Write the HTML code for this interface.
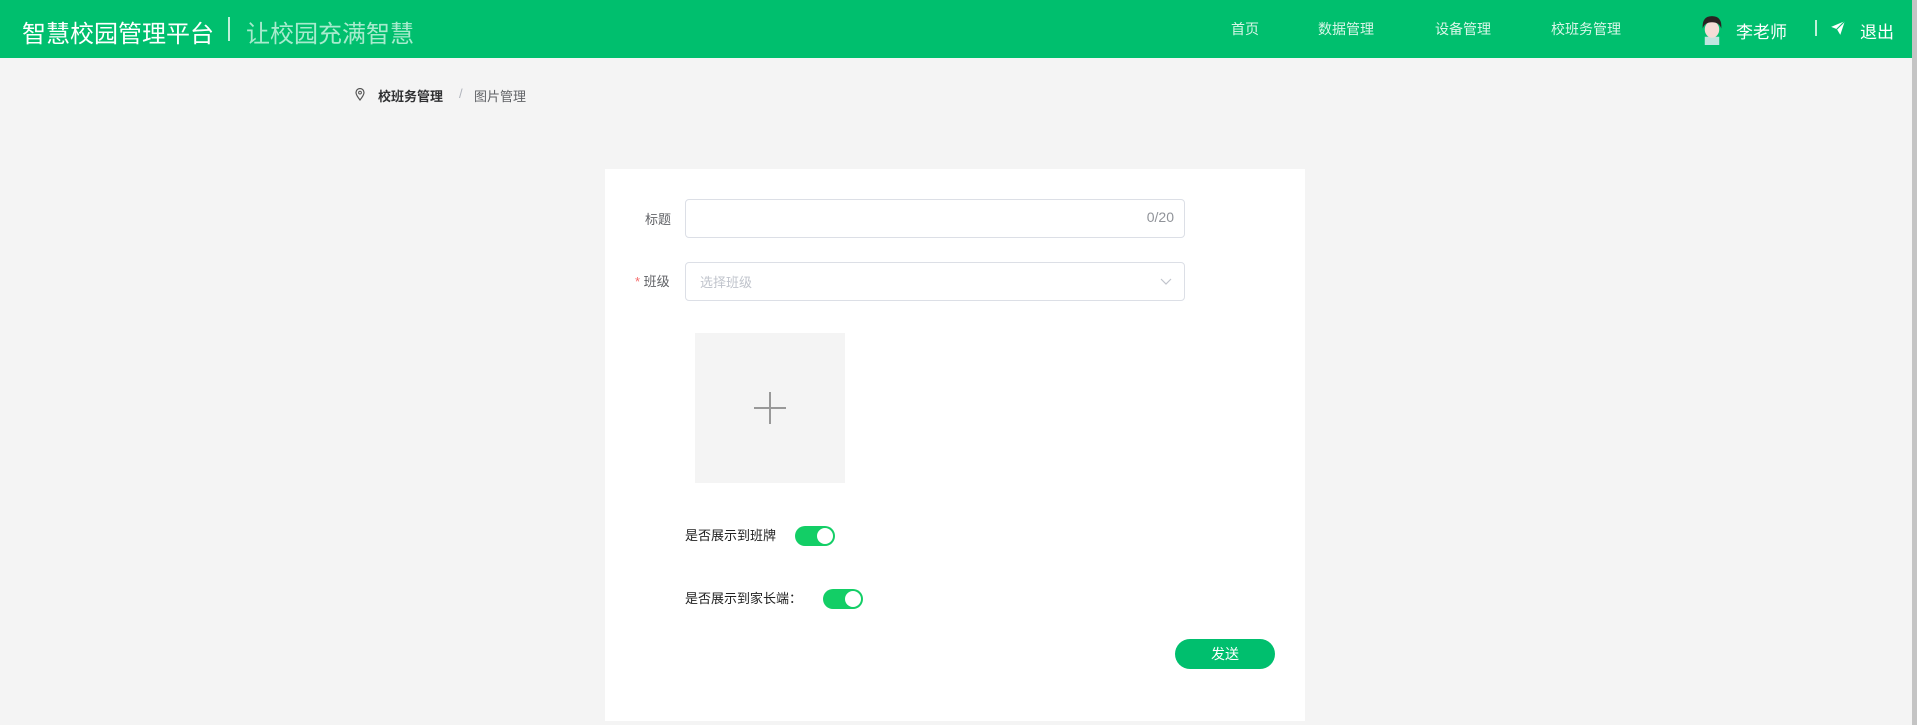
<!DOCTYPE html>
<html><head><meta charset="utf-8"><style>
*{margin:0;padding:0;box-sizing:border-box}
body{width:1917px;height:725px;overflow:hidden;background:#f4f4f4;font-family:"Liberation Sans","Noto Sans CJK SC",sans-serif;position:relative}
.hd{position:absolute;left:0;top:0;width:1912px;height:58px;background:#00bf6e}
.t{position:absolute;color:#fff;white-space:nowrap}
.sb{position:absolute;right:0;top:0;width:5px;height:725px;background:#c4c4c4}
.card{position:absolute;left:605px;top:169px;width:700px;height:552px;background:#fff}
.inp{position:absolute;left:80px;width:500px;height:39px;border:1px solid #dcdfe6;border-radius:4px}
.lbl{position:absolute;font-size:13px;color:#606266}
.tg{position:absolute;width:40px;height:20px;border-radius:10px;background:#13ce66}
.tg:after{content:"";position:absolute;right:2px;top:2px;width:16px;height:16px;border-radius:50%;background:#fff}
</style></head><body>
<div class="hd">
<div class="t" style="left:22px;top:14px;font-size:24px">智慧校园管理平台</div>
<div style="position:absolute;left:228px;top:17px;width:2px;height:24px;background:#bff0d9"></div>
<div class="t" style="left:246px;top:14px;font-size:24px;color:#a7ebcd">让校园充满智慧</div>
<div class="t" style="left:1231px;top:19px;font-size:14px;color:#d8f6e8">首页</div>
<div class="t" style="left:1318px;top:19px;font-size:14px;color:#d8f6e8">数据管理</div>
<div class="t" style="left:1435px;top:19px;font-size:14px;color:#d8f6e8">设备管理</div>
<div class="t" style="left:1551px;top:19px;font-size:14px;color:#d8f6e8">校班务管理</div>
<svg style="position:absolute;left:1700px;top:14px" width="24" height="31" viewBox="0 0 22 30"><rect x="4" y="22" width="14" height="8" fill="#bfe5e0"/><ellipse cx="11" cy="15" rx="7" ry="8" fill="#f4dcd6"/><path d="M2 14 Q1 2 11 2 Q21 2 20 14 Q18 8 11 8 Q4 8 2 14Z" fill="#2a2222"/></svg>
<div class="t" style="left:1736px;top:18px;font-size:17px">李老师</div>
<div style="position:absolute;left:1815px;top:20px;width:2px;height:16px;background:#bff0d9"></div>
<svg style="position:absolute;left:1830px;top:20px" width="16" height="16" viewBox="0 0 14 14"><path d="M1 6 L13 1 L9 13 L6 8 Z" fill="#fff"/><path d="M6 8 L13 1" stroke="#00bf6e" stroke-width="1"/></svg>
<div class="t" style="left:1860px;top:18px;font-size:17px">退出</div>
</div>
<div class="sb"></div>
<svg style="position:absolute;left:355px;top:88px" width="10" height="13" viewBox="0 0 10 13"><path d="M5 12 C1 7 1 5 1 4.5 A4 4 0 0 1 9 4.5 C9 5 9 7 5 12Z" fill="none" stroke="#555" stroke-width="1.2"/><circle cx="5" cy="4.6" r="1.4" fill="none" stroke="#555"/></svg>
<div class="t" style="left:378px;top:86px;font-size:13px;color:#303133;font-weight:bold">校班务管理</div>
<div class="t" style="left:459px;top:86px;font-size:13px;color:#b0b4bc">/</div>
<div class="t" style="left:474px;top:86px;font-size:13px;color:#606266">图片管理</div>
<div class="card">
<div class="lbl" style="left:40px;top:40px">标题</div>
<div class="inp" style="top:30px"><span style="position:absolute;right:10px;top:9px;font-size:14px;color:#909399">0/20</span></div>
<div class="lbl" style="left:30px;top:102px"><span style="color:#f56c6c">*</span> 班级</div>
<div class="inp" style="top:93px"><span style="position:absolute;left:14px;top:9px;font-size:13px;color:#c0c4cc">选择班级</span><svg style="position:absolute;right:12px;top:15px" width="12" height="8" viewBox="0 0 12 8"><path d="M1 1 L6 6 L11 1" fill="none" stroke="#c0c4cc" stroke-width="1.2"/></svg></div>
<div style="position:absolute;left:90px;top:164px;width:150px;height:150px;background:#f4f4f4">
<div style="position:absolute;left:59px;top:74px;width:32px;height:2px;background:#999"></div>
<div style="position:absolute;left:74px;top:59px;width:2px;height:32px;background:#999"></div></div>
<div class="lbl" style="left:80px;top:356px;color:#222">是否展示到班牌</div>
<div class="tg" style="left:190px;top:357px"></div>
<div class="lbl" style="left:80px;top:419px;color:#222">是否展示到家长端：</div>
<div class="tg" style="left:218px;top:420px"></div>
<div style="position:absolute;left:570px;top:470px;width:100px;height:30px;border-radius:15px;background:#00bf6e;color:#fff;font-size:14px;text-align:center;line-height:30px">发送</div>
</div>
</body></html>
